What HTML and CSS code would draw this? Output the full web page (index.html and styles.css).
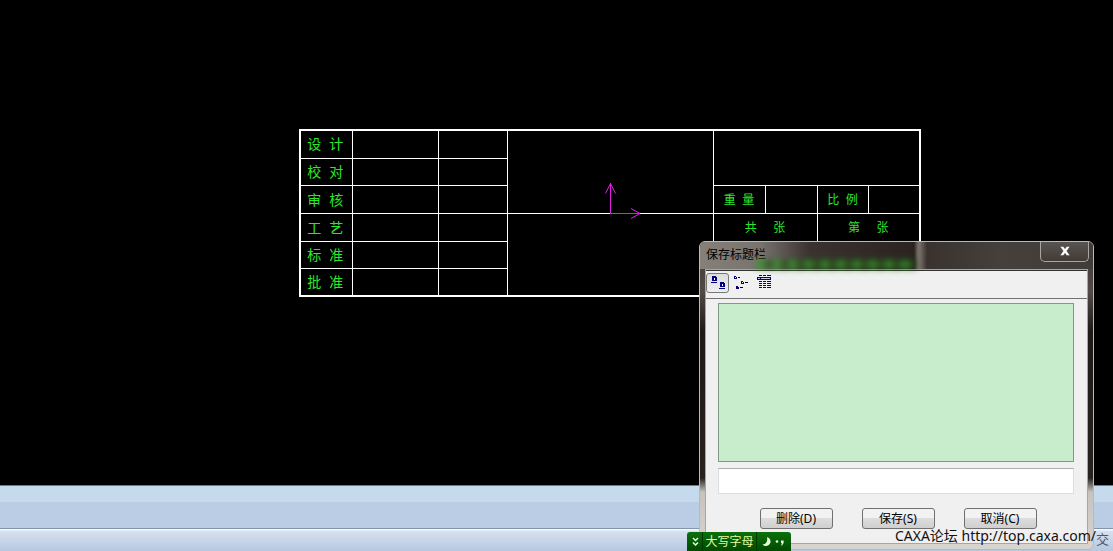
FILE: index.html
```html
<!DOCTYPE html>
<html lang="zh-CN">
<head>
<meta charset="utf-8">
<title>保存标题栏</title>
<link rel="stylesheet" href="styles.css">
</head>
<body>
<main class="canvas">
  <table class="title-block">
    <colgroup>
      <col class="c-label"><col class="c-name"><col class="c-date"><col class="c-main">
      <col class="c-quarter"><col class="c-quarter"><col class="c-narrow"><col class="c-quarter">
    </colgroup>
    <tbody>
      <tr class="first"><td>设  计</td><td></td><td></td><td rowspan="3"></td><td colspan="4" rowspan="2"></td></tr>
      <tr><td>校  对</td><td></td><td></td></tr>
      <tr class="third"><td>审  核</td><td></td><td></td><td class="small">重  量</td><td></td><td class="small">比  例</td><td></td></tr>
      <tr><td>工  艺</td><td></td><td></td><td rowspan="3"></td><td colspan="2" class="sheet">共     张</td><td colspan="2" class="sheet">第     张</td></tr>
      <tr><td>标  准</td><td></td><td></td><td colspan="4" rowspan="2" class="name-cell"></td></tr>
      <tr><td>批  准</td><td></td><td></td></tr>
    </tbody>
  </table>
  <svg class="axes" width="36" height="40" viewBox="0 0 36 40" fill="none" stroke="#e01ee0" aria-hidden="true">
    <path d="M5.500 32.500V2M.5 12.500 5.500 2.500l5 10M26 27.500l9 5-9 5"/>
    <path d="M5 32h30v1H5z" fill="#e01ee0" stroke="none"/>
  </svg>
</main>
<div class="band"></div>
<footer class="status"><span>交</span></footer>

<section class="dialog" role="dialog" aria-labelledby="dialog-title">
  <header class="dialog-head">
    <h1 id="dialog-title">保存标题栏</h1>
    <div class="glow"></div>
    <button class="close" type="button" aria-label="关闭">
      <svg width="12" height="10" viewBox="0 0 12 10"><path d="M1 .5h3.300L6 2.700 7.700.5H11L7.800 5 11 9.500H7.700L6 7.300 4.300 9.500H1L4.200 5z" fill="#fff" stroke="#333" stroke-width=".4"/></svg>
    </button>
  </header>
  <div class="dialog-body">
    <div class="toolbar">
      <button class="tool active" type="button" aria-label="大图标">
        <svg width="18" height="16" viewBox="0 0 18 16" shape-rendering="crispEdges"><path d="M3 1h4v1h1v4H3zM2 7h6v1H2zM11 7h4v1h1v4h-5zM10 13h6v1h-6z" fill="#000080"/><path d="M5 3h1v2H5zM13 9h1v2h-1z" fill="#fff"/></svg>
      </button>
      <button class="tool" type="button" aria-label="小图标">
        <svg width="18" height="16" viewBox="0 0 18 16" shape-rendering="crispEdges"><path d="M2 1h2v1h1v2H2zM9 6h2v1h1v2H9zM4 11h2v1h1v2H4z" fill="#000080"/><path d="M3 2h1v1H3zM10 7h1v1h-1z" fill="#fff"/><path d="M6 2h2v1H6zM13 7h3v1h-3zM8 12h3v1H8z" fill="#000"/></svg>
      </button>
      <button class="tool" type="button" aria-label="列表">
        <svg width="18" height="16" viewBox="0 0 18 16" shape-rendering="crispEdges"><path d="M4 0h3v1H4zM8 0h3v1H8zM12 0h4v1h-4zM2 2h14v3H2z" fill="#000080"/><path d="M3 3h2v1H3zM6 3h9v1H6z" fill="#c8c8e8"/><path d="M4 6h3v1H4zM8 6h3v1H8zM12 6h4v1h-4zM4 8h3v1H4zM8 8h3v1H8zM12 8h4v1h-4zM4 10h3v1H4zM8 10h3v1H8zM12 10h4v1h-4zM4 12h3v1H4zM8 12h3v1H8zM12 12h4v1h-4z" fill="#111"/></svg>
      </button>
    </div>
    <div class="content">
      <div class="file-list"></div>
      <input class="file-name" type="text" aria-label="名称">
      <div class="actions">
        <button type="button">删除(D)</button>
        <button type="button">保存(S)</button>
        <button type="button">取消(C)</button>
      </div>
    </div>
  </div>
</section>

<div class="ime">
  <svg class="ime-part" width="15" height="19" viewBox="0 0 15 19" fill="none" stroke="#e8ffd8" stroke-width="1.500" aria-hidden="true"><path d="m6 6 2.500 2.500L11 6M6 10.500 8.500 13l2.500-2.500"/></svg>
  <span class="ime-text">大写字母</span>
  <svg class="ime-part" width="34" height="19" viewBox="0 0 34 19" fill="#e8ffd8" aria-hidden="true"><path d="M10 5a4.600 4.600 0 1 1-4.500 7.500C9 12.500 11 9 10 5z"/><circle cx="20" cy="9.500" r="1.300"/><path d="M24 8.500h2.600v2.500l-1.600 2.500h-.8l.7-2.500H24z"/></svg>
</div>
<div class="watermark">CAXA论坛 http://top.caxa.com/</div>
</body>
</html>
```
FILE: styles.css
```css
* { box-sizing: border-box; }

body {
  margin: 0;
  min-height: 100vh;
  display: flex;
  flex-direction: column;
  position: relative;
  overflow: hidden;
  background: #000;
  font: 12px/16px "Liberation Sans", "Noto Sans CJK SC", sans-serif;
  color: #000;
}

.canvas {
  flex: 1;
  position: relative;
  background: #000;
}

.title-block {
  position: absolute;
  left: 299px;
  top: 129px;
  width: 621px;
  height: 168px;
  table-layout: fixed;
  border-collapse: collapse;
  border: 2px solid #fff;
  color: #2be82b;
  font-size: 14px;
  line-height: 20px;
}

.title-block td {
  height: 27px;
  padding: 0 2px 0 0;
  border: 1px solid #fff;
  text-align: center;
  white-space: pre;
}

.title-block .first td,
.title-block .third td { height: 28px; }

.title-block .small,
.title-block .sheet {
  padding-right: 0;
  font-size: 12px;
}

.title-block .name-cell { border-top-color: #000; }

.c-label { width: 52px; }
.c-name { width: 86px; }
.c-date { width: 69px; }
.c-main { width: 206px; }
.c-quarter { width: 52px; }
.c-narrow { width: 51px; }

.axes {
  position: absolute;
  z-index: 1;
  left: 605px;
  top: 181px;
}

.band {
  height: 43px;
  border-top: 1px solid #6f7884;
  background: linear-gradient(#c6daee 0 16px, #bacde4 16px);
}

.status {
  height: 23px;
  display: flex;
  justify-content: flex-end;
  padding: 3px 4px 0 0;
  border-top: 1px solid #8496ac;
  background: linear-gradient(#f4f8fc 0 1px, #d6e2f0 2px, #cfdcec 6px, #b6c8e0);
  color: #4a5870;
  font-size: 13px;
}

.dialog {
  position: absolute;
  left: 699px;
  top: 241px;
  width: 395px;
  height: 309px;
  display: flex;
  flex-direction: column;
  padding: 0 5px 5px;
  border: 1px solid #bdb8b5;
  border-radius: 6px;
  background: linear-gradient(#49423e 0 30px, #514a47 50px, #1d1a18 90px, #28221e 236px, #c8c2be 250px, #d8d4d0);
}

.dialog-head {
  position: relative;
  display: flex;
  justify-content: space-between;
  height: 27px;
  margin: 0 -5px;
  padding-left: 6px;
  border-radius: 5px 5px 0 0;
  background: linear-gradient(90deg, #858078 0, #79736f 60px, #3a322e 110px, #2a2320 214px, #756d67 218px 220px, #39322e 227px, #45403b 300px, #403c38);
}

.dialog-head h1 {
  margin: 0;
  padding-top: 5px;
  font-size: 12px;
  font-weight: 400;
  line-height: 16px;
}

.glow {
  position: absolute;
  left: 56px;
  bottom: 0;
  width: 160px;
  height: 9px;
  background: repeating-linear-gradient(90deg, #2f9a22 0 7px, #28401f 13px 16px);
  filter: blur(3px);
  opacity: .8;
}

.close {
  display: grid;
  place-items: center;
  width: 49px;
  height: 20px;
  margin-right: 4px;
  padding: 0 0 2px;
  border: 1px solid #aaa5a0;
  border-top: 0;
  border-radius: 0 0 5px 5px;
  background: linear-gradient(#5a5551, #403b37);
}

.dialog-body {
  flex: 1;
  display: flex;
  flex-direction: column;
  border: 1px solid #a8a5a2;
  background: #f0f0f0;
}

.toolbar {
  display: flex;
  height: 29px;
  padding: 2px 0 0;
  border-top: 1px solid #333;
  border-bottom: 1px solid #707070;
}

.tool {
  display: grid;
  place-items: center;
  width: 23px;
  height: 20px;
  padding: 0;
  border: 1px solid transparent;
  border-radius: 3px;
  background: none;
}

.tool.active {
  border-color: #777;
  background: linear-gradient(#ddd, #eee);
}

.content {
  flex: 1;
  display: flex;
  flex-direction: column;
  padding: 4px 13px 0 12px;
}

.file-list {
  height: 159px;
  border: 1px solid #7f9a86;
  background: #c7edcc;
}

.file-name {
  height: 26px;
  margin-top: 6px;
  padding: 2px 6px;
  border: 1px solid #dcdde0;
  border-top-color: #abadb3;
  background: #fff;
  font: inherit;
}

.actions {
  display: flex;
  justify-content: center;
  gap: 29px;
  padding: 14px 0 0 4px;
}

.actions button {
  width: 73px;
  height: 21px;
  padding: 0;
  border: 1px solid #707070;
  border-radius: 3px;
  background: linear-gradient(#f2f2f2 50%, #dddddd 50%, #cfcfcf);
  font: 12px/16px "Noto Sans", "Noto Sans CJK SC", sans-serif;
  color: #000;
}

.ime {
  position: absolute;
  left: 687px;
  bottom: 0;
  width: 104px;
  height: 19px;
  display: flex;
  align-items: center;
  border-radius: 3px 3px 0 0;
  background: linear-gradient(#0c700c, #004a00);
}

.ime-text {
  flex: 1;
  padding: 2px 0 1px;
  border: solid #003800;
  border-width: 0 1px;
  color: #e2fca0;
  text-align: center;
}

.watermark {
  position: absolute;
  right: 17px;
  bottom: 5px;
  font: 14px/20px "Noto Sans", "Noto Sans CJK SC", sans-serif;
  white-space: nowrap;
  color: #111;
}
```
